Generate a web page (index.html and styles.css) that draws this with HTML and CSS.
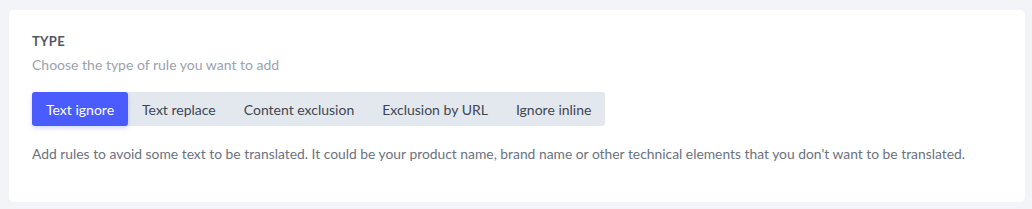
FILE: index.html
```html
<!DOCTYPE html>
<html lang="en">
<head>
    <meta charset="UTF-8">
    <meta name="viewport" content="width=device-width, initial-scale=1.0">
    <title>Rule type</title>
    <link rel="stylesheet" href="styles.css">
</head>
<body>
    <div class="card">
        <h3 class="label">TYPE</h3>
        <p class="hint">Choose the type of rule you want to add</p>
        <div class="tabs">
            <button class="tab active">Text ignore</button>
            <button class="tab">Text replace</button>
            <button class="tab">Content exclusion</button>
            <button class="tab">Exclusion by URL</button>
            <button class="tab">Ignore inline</button>
        </div>
        <p class="desc">Add rules to avoid some text to be translated. It could be your product name, brand name or other technical elements that you don't want to be translated.</p>
    </div>
</body>
</html>
```

FILE: styles.css
```css
body {
    margin: 0;
    padding: 10px 7px 7px 9px;
    background-color: #f3f4f8;
    font-family: Lato, "Noto Sans", sans-serif;
}
.card {
    background-color: #fff;
    border-radius: 5px;
    padding: 23px 23px 37px 23px;
    height: 132px;
}
.label {
    margin: 0;
    font-size: 13px;
    font-weight: 700;
    color: #505766;
    letter-spacing: 0.3px;
    line-height: 16px;
}
.hint {
    margin: 6px 0 0;
    font-size: 14px;
    color: #9ca2ae;
    line-height: 20px;
}
.tabs {
    display: inline-flex;
    margin-top: 17px;
    background-color: #e3e8ef;
    border-radius: 3px;
}
.tab {
    height: 34px;
    padding: 0 14px;
    border: none;
    background: none;
    font-family: inherit;
    font-size: 14px;
    color: #3f4653;
    cursor: pointer;
}
.tab.active {
    background-color: #4a5cff;
    color: #fff;
    border-radius: 3px;
    box-shadow: 0 2px 4px rgba(74, 92, 255, 0.25);
}
.desc {
    margin: 18px 0 0;
    font-size: 13.85px;
    color: #6b7280;
    line-height: 20px;
}
```
